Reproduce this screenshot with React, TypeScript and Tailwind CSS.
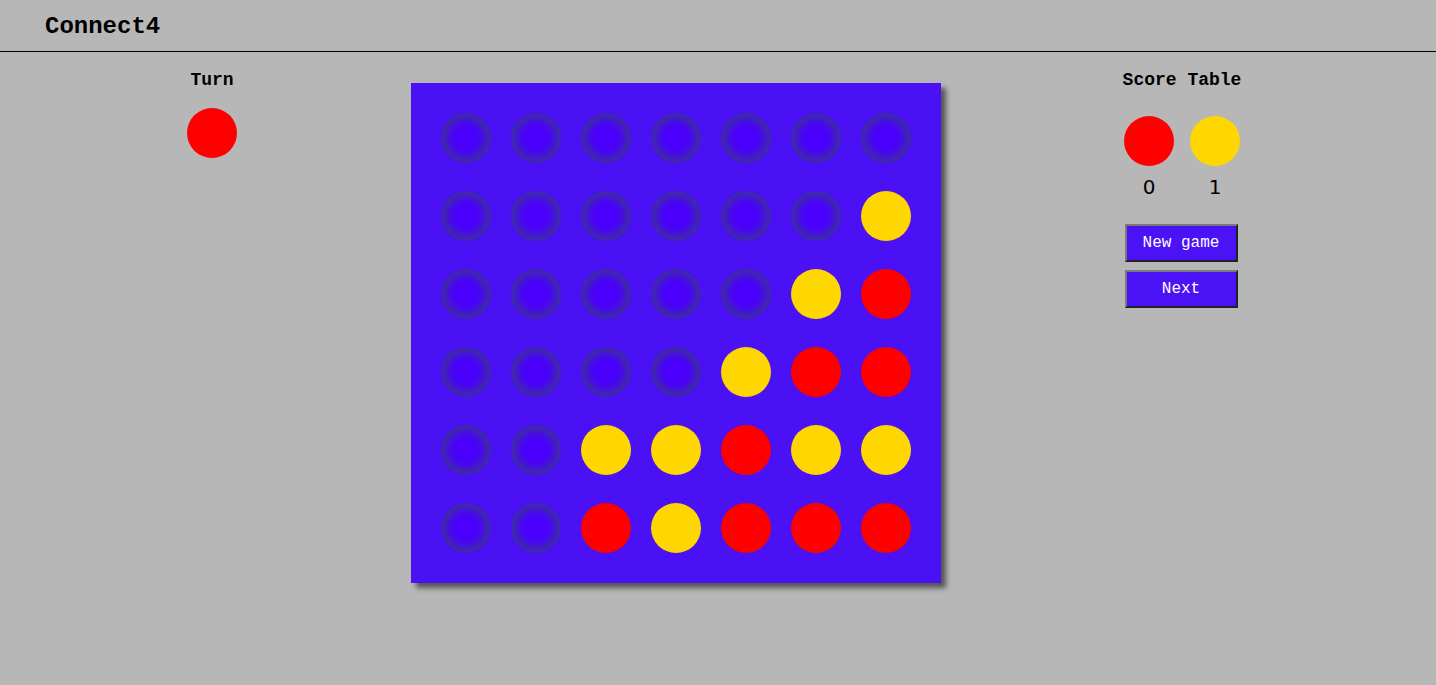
import React from 'react';

type Cell = 0 | 1 | 2; // 0 empty, 1 red, 2 yellow

const board: Cell[][] = [
  [0, 0, 0, 0, 0, 0, 0],
  [0, 0, 0, 0, 0, 0, 2],
  [0, 0, 0, 0, 0, 2, 1],
  [0, 0, 0, 0, 2, 1, 1],
  [0, 0, 2, 2, 1, 2, 2],
  [0, 0, 1, 2, 1, 1, 1],
];

const mono = { fontFamily: '"Liberation Mono", "Courier New", monospace' };

function Disc({ cell }: { cell: Cell }) {
  if (cell === 1) return <div className="w-[50px] h-[50px] rounded-full bg-[#ff0000]" />;
  if (cell === 2) return <div className="w-[50px] h-[50px] rounded-full bg-[#ffd700]" />;
  return (
    <div className="w-[50px] h-[50px] rounded-full bg-[#4a00fc] shadow-[inset_0_0_9px_6px_#3f2ea4]" />
  );
}

function Button({ label }: { label: string }) {
  return (
    <button
      className="w-[113px] h-[38px] bg-[#4b12f6] text-white text-[16px] border-2 border-t-[#7a7a7a] border-l-[#7a7a7a] border-b-[#222] border-r-[#222]"
      style={mono}
    >
      {label}
    </button>
  );
}

export default function App() {
  return (
    <div className="min-h-[685px] bg-[#b7b7b7] text-black" style={mono}>
      <header className="h-[52px] border-b border-black flex items-center px-[45px]">
        <h1 className="text-[24px] font-bold leading-none mt-[2px]">Connect4</h1>
      </header>

      <main className="flex items-start">
        {/* tour */}
        <div className="ml-[162px] w-[100px] flex flex-col items-center pt-[18px]">
          <h2 className="text-[18px] font-bold leading-[20px]">Turn</h2>
          <div className="mt-[18px] w-[50px] h-[50px] rounded-full bg-[#ff0000]" />
        </div>

        {/* plateau */}
        <div className="ml-[149px] mt-[31px] w-[530px] h-[500px] bg-[#4a11f5] shadow-[5px_5px_5px_#555] p-[30px] grid grid-cols-7 gap-x-[20px] gap-y-[28px]">
          {board.flat().map((c, i) => (
            <Disc key={i} cell={c} />
          ))}
        </div>

        {/* scores */}
        <div className="ml-[171px] w-[140px] flex flex-col items-center pt-[18px]">
          <h2 className="text-[18px] font-bold leading-[20px] whitespace-nowrap">Score Table</h2>
          <div className="mt-[26px] flex gap-[16px]">
            <div className="flex flex-col items-center">
              <div className="w-[50px] h-[50px] rounded-full bg-[#ff0000]" />
              <span className="mt-[9px] text-[20px] leading-[24px]" style={{ fontFamily: '"DejaVu Sans", Verdana, sans-serif' }}>0</span>
            </div>
            <div className="flex flex-col items-center">
              <div className="w-[50px] h-[50px] rounded-full bg-[#ffd700]" />
              <span className="mt-[9px] text-[20px] leading-[24px]" style={{ fontFamily: '"DejaVu Sans", Verdana, sans-serif' }}>1</span>
            </div>
          </div>
          <div className="mt-[25px] mr-[2px] flex flex-col gap-[8px]">
            <Button label="New game" />
            <Button label="Next" />
          </div>
        </div>
      </main>
    </div>
  );
}
